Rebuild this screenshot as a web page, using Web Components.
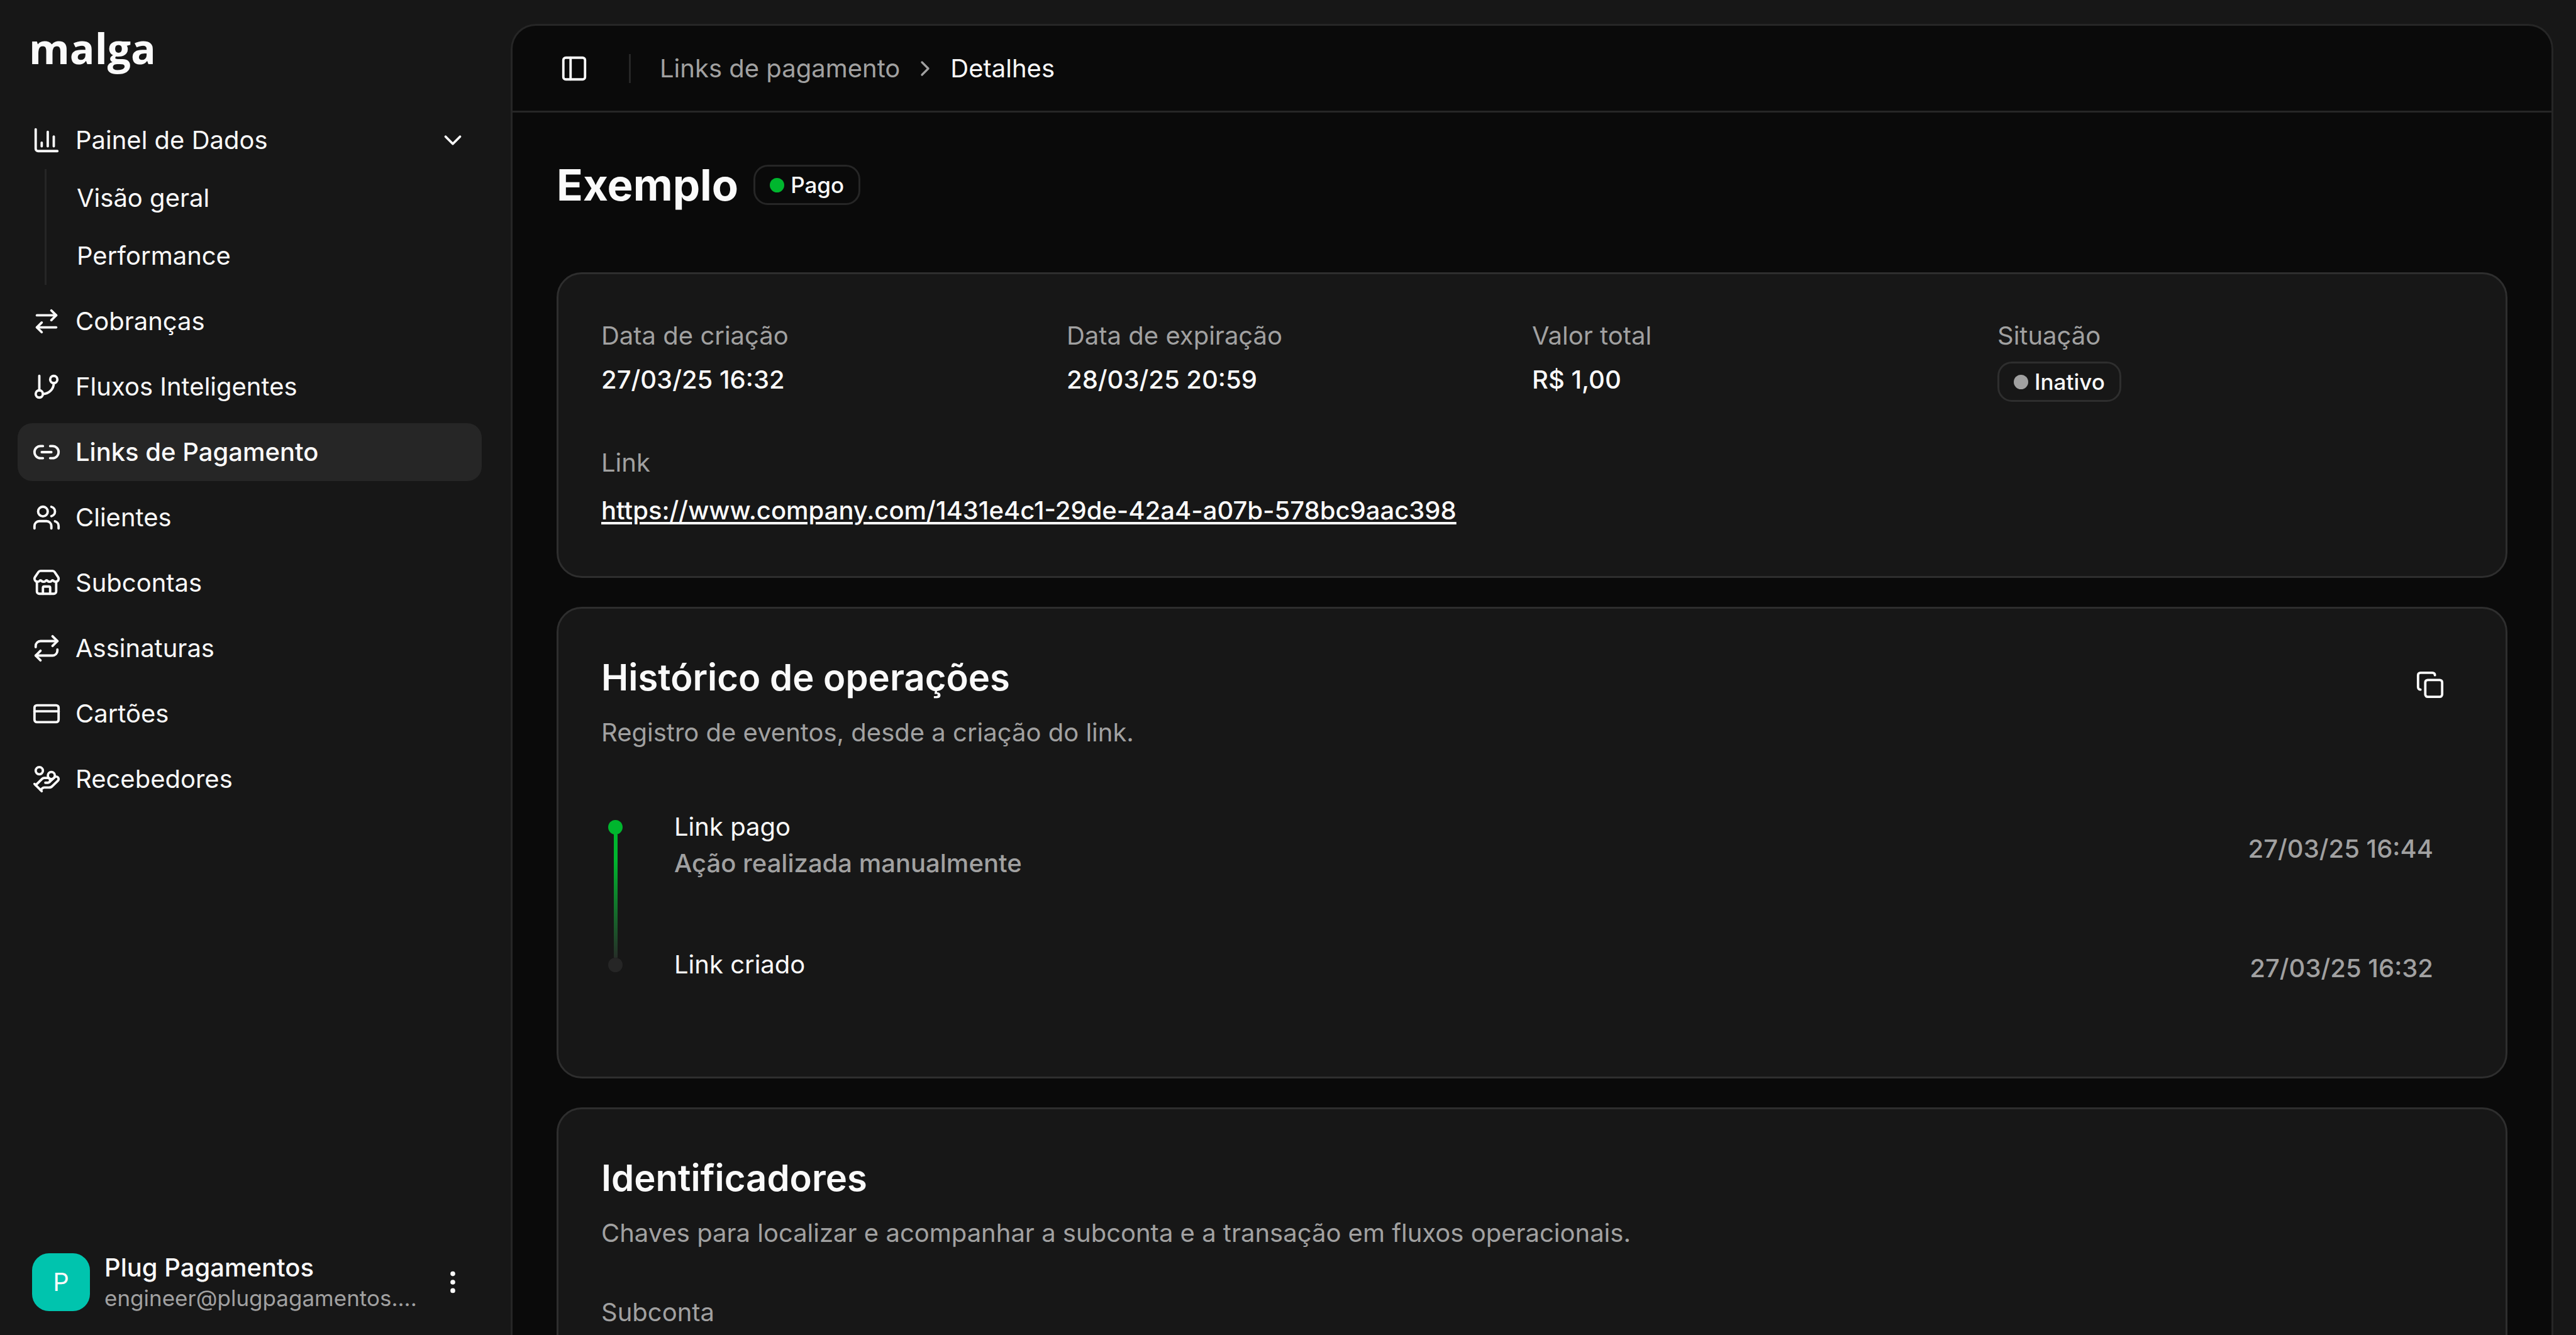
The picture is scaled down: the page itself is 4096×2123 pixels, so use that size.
<!DOCTYPE html>
<html lang="pt-BR">
<head>
<meta charset="utf-8">
<meta name="viewport" content="width=device-width, initial-scale=1">
<title>Malga – Links de pagamento</title>
<style>
  :root {
    --surface: #171717;
    --canvas: #0a0a0a;
    --line: #262626;
    --card-line: #2e2e2e;
    --text: #fafafa;
    --muted: #a1a1a1;
    --green: #00b62e;
  }
  html, body { margin: 0; height: 100%; }
  body {
    overflow: hidden;
    background: var(--surface);
    color: var(--text);
    font: 400 40px/58px Inter, "Liberation Sans", sans-serif;
  }
</style>
</head>
<body>
<malga-app></malga-app>

<script>
  const ICONS = {
    chart: '<path d="M3 3v16a2 2 0 0 0 2 2h16"/><path d="M18 17V9"/><path d="M13 17V5"/><path d="M8 17v-3"/>',
    transfer: '<path d="m16 3 4 4-4 4"/><path d="M20 7H4"/><path d="m8 21-4-4 4-4"/><path d="M4 17h16"/>',
    branch: '<path d="M6 3v12"/><circle cx="18" cy="6" r="3"/><circle cx="6" cy="18" r="3"/><path d="M18 9a9 9 0 0 1-9 9"/>',
    link: '<path d="M9 17H7A5 5 0 0 1 7 7h2"/><path d="M15 7h2a5 5 0 1 1 0 10h-2"/><path d="M8 12h8"/>',
    users: '<path d="M16 21v-2a4 4 0 0 0-4-4H6a4 4 0 0 0-4 4v2"/><circle cx="9" cy="7" r="4"/><path d="M22 21v-2a4 4 0 0 0-3-3.87"/><path d="M16 3.13a4 4 0 0 1 0 7.75"/>',
    store: '<path d="M15 21v-5a1 1 0 0 0-1-1h-4a1 1 0 0 0-1 1v5"/><path d="M17.774 10.31a1.12 1.12 0 0 0-1.549 0 2.5 2.5 0 0 1-3.451 0 1.12 1.12 0 0 0-1.548 0 2.5 2.5 0 0 1-3.452 0 1.12 1.12 0 0 0-1.549 0 2.5 2.5 0 0 1-3.77-3.248l2.889-4.184A2 2 0 0 1 7 2h10a2 2 0 0 1 1.653.873l2.895 4.192a2.5 2.5 0 0 1-3.774 3.244"/><path d="M4 10.95V19a2 2 0 0 0 2 2h12a2 2 0 0 0 2-2v-8.05"/>',
    repeat: '<path d="m17 2 4 4-4 4"/><path d="M3 11v-1a4 4 0 0 1 4-4h14"/><path d="m7 22-4-4 4-4"/><path d="M21 13v1a4 4 0 0 1-4 4H3"/>',
    card: '<rect width="20" height="14" x="2" y="5" rx="2"/><path d="M2 10h20"/>',
    coins: '<path d="M11 15h2a2 2 0 1 0 0-4h-3c-.6 0-1.1.2-1.4.6L3 17"/><path d="m7 21 1.6-1.4c.3-.4.8-.6 1.4-.6h4c1.1 0 2.1-.4 2.8-1.2l4.6-4.4a2 2 0 0 0-2.75-2.91l-4.2 3.9"/><path d="m2 16 6 6"/><circle cx="16" cy="9" r="2.9"/><circle cx="6" cy="5" r="3"/>',
    panel: '<rect width="18" height="18" x="3" y="3" rx="2"/><path d="M9 3v18"/>',
    copy: '<rect width="14" height="14" x="8" y="8" rx="2"/><path d="M4 16c-1.1 0-2-.9-2-2V4c0-1.1.9-2 2-2h10c1.1 0 2 .9 2 2"/>',
    down: '<path d="m6 9 6 6 6-6"/>',
    right: '<path d="m9 18 6-6-6-6"/>',
    dots: '<circle cx="12" cy="12" r="1"/><circle cx="12" cy="5" r="1"/><circle cx="12" cy="19" r="1"/>'
  };

  const define = (name, render) => customElements.define(name, class extends HTMLElement {
    connectedCallback() {
      if (this.shadowRoot) return;
      const attr = (key) => this.getAttribute(key) || '';
      this.attachShadow({ mode: 'open' }).innerHTML = render(attr);
    }
  });

  define('app-icon', (attr) => `
    <style>
      :host { display: block; flex: none; width: 46px; height: 46px; }
      :host([name="right"]) { width: 40px; height: 40px; }
      svg { display: block; width: 100%; height: 100%; }
    </style>
    <svg viewBox="0 0 24 24" fill="none" stroke="currentColor" stroke-width="2"
      stroke-linecap="round" stroke-linejoin="round" aria-hidden="true">${ICONS[attr('name')]}</svg>`);

  define('nav-item', (attr) => `
    <style>
      :host { display: block; }
      a {
        display: flex; align-items: center; gap: 23px; height: 92px; padding: 0 23px;
        border-radius: 23px; color: inherit; text-decoration: none;
      }
      :host([active]) a { background: #262626; font-weight: 500; }
      span { flex: 1; }
    </style>
    <a href="#">${attr('icon') ? `<app-icon name="${attr('icon')}"></app-icon>` : ''}<span><slot></slot></span></a>`);

  define('nav-group', (attr) => `
    <style>
      :host { display: block; }
      button {
        display: flex; align-items: center; gap: 23px; width: 100%; height: 92px; padding: 0 23px;
        border: 0; border-radius: 23px; background: none; color: inherit; font: inherit; text-align: left;
      }
      span { flex: 1; }
      .children { margin-left: 43px; padding-left: 25px; border-left: 3px solid var(--line); }
    </style>
    <button type="button" aria-expanded="true">
      <app-icon name="${attr('icon')}"></app-icon><span>${attr('label')}</span><app-icon name="down"></app-icon>
    </button>
    <div class="children"><slot></slot></div>`);

  define('user-menu', () => `
    <style>
      :host { display: block; }
      button {
        display: flex; align-items: center; gap: 23px; width: 100%; padding: 0 23px;
        border: 0; background: none; color: inherit; font: inherit; text-align: left;
      }
      .avatar {
        flex: none; width: 92px; height: 92px; border-radius: 27px; background: #00c4ae;
        line-height: 92px; text-align: center;
      }
      .who { flex: 1; display: flex; flex-direction: column; min-width: 0; }
      .name { font-weight: 500; line-height: 50px; }
      .mail { font-size: 35px; line-height: 46px; color: var(--muted); white-space: nowrap; }
    </style>
    <button type="button">
      <span class="avatar">P</span>
      <span class="who"><span class="name">Plug Pagamentos</span><span class="mail">engineer@plugpagamentos....</span></span>
      <app-icon name="dots"></app-icon>
    </button>`);

  define('side-bar', () => `
    <style>
      :host {
        box-sizing: border-box; display: flex; flex-direction: column; flex: none;
        width: 812px; padding: 32px 46px 36px 28px;
      }
      .brand {
        height: 145px; padding-left: 18px; color: inherit; text-decoration: none;
        font: 700 66px/88px "Open Sans", "Noto Sans", sans-serif;
      }
      nav { flex: 1; display: flex; flex-direction: column; gap: 12px; }
    </style>
    <a class="brand" href="#">malga</a>
    <nav>
      <nav-group icon="chart" label="Painel de Dados">
        <nav-item>Visão geral</nav-item>
        <nav-item>Performance</nav-item>
      </nav-group>
      <nav-item icon="transfer">Cobranças</nav-item>
      <nav-item icon="branch">Fluxos Inteligentes</nav-item>
      <nav-item icon="link" active>Links de Pagamento</nav-item>
      <nav-item icon="users">Clientes</nav-item>
      <nav-item icon="store">Subcontas</nav-item>
      <nav-item icon="repeat">Assinaturas</nav-item>
      <nav-item icon="card">Cartões</nav-item>
      <nav-item icon="coins">Recebedores</nav-item>
    </nav>
    <user-menu></user-menu>`);

  define('top-bar', () => `
    <style>
      :host {
        display: flex; align-items: center; height: 135px; padding: 0 75px;
        border-bottom: 3px solid var(--line);
      }
      button { padding: 0; border: 0; background: none; color: inherit; }
      .rule { width: 3px; height: 46px; margin: 0 46px 0 64px; background: var(--line); }
      nav { display: flex; align-items: center; gap: 20px; color: var(--muted); }
      a { color: inherit; text-decoration: none; }
      [aria-current] { color: var(--text); }
    </style>
    <button type="button" aria-label="Alternar menu"><app-icon name="panel"></app-icon></button>
    <div class="rule"></div>
    <nav>
      <a href="#">Links de pagamento</a>
      <app-icon name="right"></app-icon>
      <span aria-current="page">Detalhes</span>
    </nav>`);

  define('status-badge', () => `
    <style>
      :host {
        display: inline-flex; align-items: center; gap: 10px; height: 58px; padding: 0 23px;
        border: 3px solid var(--card-line); border-radius: 23px;
        color: var(--text); font-size: 35px; font-weight: 500; line-height: 46px;
      }
      i { width: 23px; height: 23px; border-radius: 50%; background: var(--muted); }
      :host([tone="success"]) { border-color: var(--line); }
      :host([tone="success"]) i { background: var(--green); }
    </style>
    <i></i><slot></slot>`);

  define('info-field', (attr) => `
    <style>
      :host { display: flex; flex-direction: column; align-items: flex-start; gap: 12px; font-weight: 500; }
      .label { color: var(--muted); font-weight: 400; }
      ::slotted(a) { color: inherit; line-height: 70px; text-underline-offset: 4px; }
    </style>
    <span class="label">${attr('label')}</span><slot></slot>`);

  define('data-card', (attr) => `
    <style>
      :host {
        display: block; padding: 69px 68px; border: 3px solid var(--card-line);
        border-radius: 40px; background: var(--surface);
      }
      header { display: flex; justify-content: space-between; align-items: flex-start; }
      h2 { margin: 0 0 19px; font-size: 58px; line-height: 80px; font-weight: 600; }
      p { margin: 0; color: var(--muted); }
    </style>
    ${attr('heading') ? `<header><div><h2>${attr('heading')}</h2><p>${attr('description')}</p></div><slot name="action"></slot></header>` : ''}
    <slot></slot>`);

  define('copy-button', () => `
    <style>
      :host { display: block; }
      button {
        display: flex; align-items: center; justify-content: center; width: 104px; height: 104px;
        padding: 0; border: 0; border-radius: 23px; background: none; color: inherit;
      }
    </style>
    <button type="button" aria-label="Copiar"><app-icon name="copy"></app-icon></button>`);

  define('history-entry', (attr) => `
    <style>
      :host { display: flex; align-items: stretch; padding: 0 47px 0 11px; }
      .track { display: flex; flex-direction: column; align-items: center; width: 23px; margin-right: 82px; padding-top: 18px; }
      .dot { flex: none; width: 23px; height: 23px; border-radius: 50%; background: #262626; }
      .line { display: none; flex: 1; width: 6px; margin-bottom: -18px; background: linear-gradient(var(--green) 20%, #262e28); }
      .body { flex: 1; display: flex; align-items: center; justify-content: space-between; padding-bottom: 80px; }
      .note, time { color: var(--muted); font-weight: 500; }
      .note { display: block; }
      time { margin: 6px 0 -6px; }
      :host([done]) .dot { background: var(--green); }
      :host([done]) .line { display: block; }
      :host([done]) .body { padding-bottom: 103px; }
    </style>
    <div class="track"><div class="dot"></div><div class="line"></div></div>
    <div class="body">
      <div>${attr('label')}${attr('note') ? `<span class="note">${attr('note')}</span>` : ''}</div>
      <time>${attr('time')}</time>
    </div>`);

  define('malga-app', () => `
    <style>
      :host { display: flex; height: 100vh; }
      main {
        flex: 1; min-width: 0; margin: 38px 36px 0 0; overflow: hidden; background: var(--canvas);
        border: 3px solid var(--line); border-bottom: 0; border-radius: 40px 40px 0 0;
      }
      .page { display: flex; flex-direction: column; gap: 46px; padding: 73px 70px; }
      .title { display: flex; align-items: center; gap: 24px; padding-bottom: 51px; }
      h1 { margin: 0; font-size: 69px; line-height: 84px; font-weight: 700; }
      .fields { display: grid; grid-template-columns: repeat(4, 1fr); row-gap: 68px; }
      .wide { grid-column: 1 / -1; }
      .history { padding-top: 92px; }
      .ids { padding-top: 68px; }
    </style>
    <side-bar></side-bar>
    <main>
      <top-bar></top-bar>
      <div class="page">
        <div class="title"><h1>Exemplo</h1><status-badge tone="success">Pago</status-badge></div>
        <data-card>
          <div class="fields">
            <info-field label="Data de criação"><span>27/03/25 16:32</span></info-field>
            <info-field label="Data de expiração"><span>28/03/25 20:59</span></info-field>
            <info-field label="Valor total"><span>R$ 1,00</span></info-field>
            <info-field label="Situação"><status-badge>Inativo</status-badge></info-field>
            <info-field class="wide" label="Link"><a href="#">https://www.company.com/1431e4c1-29de-42a4-a07b-578bc9aac398</a></info-field>
          </div>
        </data-card>
        <data-card heading="Histórico de operações" description="Registro de eventos, desde a criação do link.">
          <copy-button slot="action"></copy-button>
          <div class="history">
            <history-entry done label="Link pago" note="Ação realizada manualmente" time="27/03/25 16:44"></history-entry>
            <history-entry label="Link criado" time="27/03/25 16:32"></history-entry>
          </div>
        </data-card>
        <data-card heading="Identificadores" description="Chaves para localizar e acompanhar a subconta e a transação em fluxos operacionais.">
          <div class="ids"><info-field label="Subconta"></info-field></div>
        </data-card>
      </div>
    </main>`);
</script>
</body>
</html>
